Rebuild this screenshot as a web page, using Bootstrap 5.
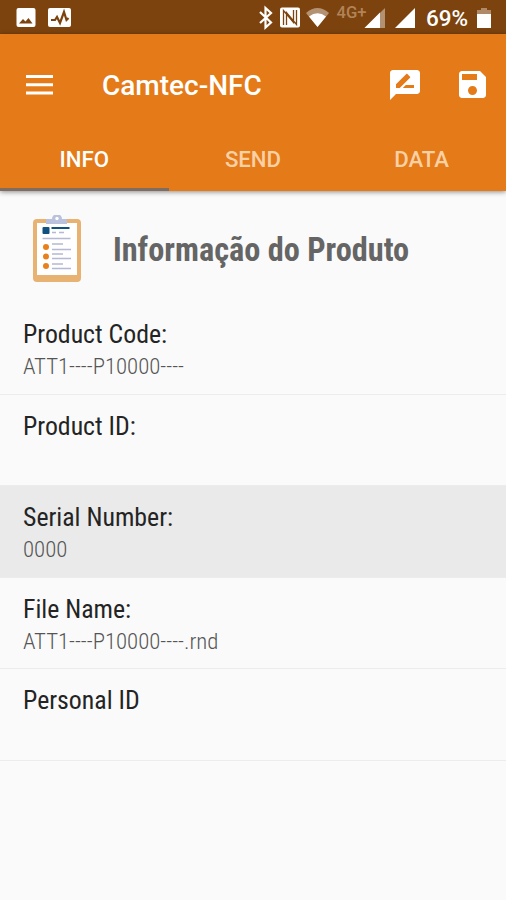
<!DOCTYPE html>
<html lang="pt">
<head>
<meta charset="utf-8">
<meta name="viewport" content="width=device-width, initial-scale=1">
<title>Camtec-NFC</title>
<link href="https://cdn.jsdelivr.net/npm/bootstrap@5.3.0/dist/css/bootstrap.min.css" rel="stylesheet">
<style>
body{font-family:Roboto,sans-serif;background:#fafafa;height:900px;overflow:hidden}
.status{height:34px;background:#7c430e}
.appbar{background:#e47a18;height:157px;box-shadow:0 1px 5px rgba(0,0,0,.45)}
.toolbar{height:103px;padding:0 20px 2px 26px}
.app-title{font-size:28px;font-weight:500;line-height:32px;margin:3px 0 0 49px;white-space:nowrap}
.tabs{height:54px}
.tabs .nav-link{height:54px;padding:0;line-height:44px;font-size:22.2px;font-weight:500;color:#fad0a4;border-radius:0}
.tabs .nav-link.active{color:#fff;border-bottom:3px solid #7e6d60}
.cond{font-family:"Roboto Condensed",Roboto,sans-serif;font-stretch:75%;white-space:nowrap}
.head{height:112px;padding:4px 0 0 32px}
.head h1{font-size:32.3px;font-weight:700;line-height:40px;color:#656565;margin:2px 0 0 31px}
.entry{height:91.5px;padding:14px 23px 0;border-bottom:1px solid #ececec}
.entry.selected{background:#eaeaea}
.entry .name{font-size:25.8px;font-weight:400;line-height:34px;color:#242424}
.entry .value{font-size:22.8px;font-weight:300;line-height:32px;color:#555}
.pct{font-size:22.5px;line-height:36px;font-weight:500;margin-left:6px}
.save{margin-left:39px}
.battery{margin-right:14px}
</style>
</head>
<body>
<header>
<div class="status d-flex text-white">
<svg width="420" height="34" viewBox="0 0 420 34" fill="#fff" class="flex-shrink-0">
<rect x="16.500" y="8" width="19" height="19" rx="2"/><path d="M19 23.500l4-4.500 2.500 2.500 3-3.500 4 5.500z" fill="#7c430e"/>
<rect x="48" y="8" width="23" height="19" rx="2"/><path d="M51 20h4l2-3 3 6 4-11 2.500 8 2-2" fill="none" stroke="#7c430e" stroke-width="2.200"/>
<path d="M260 12l11 10.500-5.500 5V8l5.500 5-11 10" fill="none" stroke="#fff" stroke-width="2.200"/>
<rect x="280" y="7.500" width="20" height="20" rx="2"/><path d="M283.500 25V10.500l10 12V10M296.500 10v14.500l-10-12V25" fill="none" stroke="#7c430e" stroke-width="1.300"/>
<path d="M317.500 27L306 13q11.500-10 23 0z" opacity=".42"/><path d="M317.500 27L309 16.500q8.500-6.500 17 0z"/>
<text x="336.500" y="18" font-size="16.500" font-weight="500" fill="#b28357" textLength="30" lengthAdjust="spacingAndGlyphs">4G+</text>
<path d="M364.500 28L385 8v20z" opacity=".42"/><path d="M364.500 28L380 12.500V28z"/><path d="M395 28L415 8v20z"/>
</svg>
<span class="pct">69%</span>
<svg width="16" height="34" viewBox="0 0 16 34" class="battery ms-auto"><path d="M1 14V10h4V8h6v2h4v4z" fill="#b08a68"/><path d="M1 14h14v14H1z" fill="#fff"/></svg>
</div>
<div class="appbar position-relative text-white">
<div class="toolbar d-flex align-items-center">
<svg width="27" height="20" viewBox="0 0 27 20" fill="#fff"><path d="M0 0h27v3H0zM0 8.200h27v3H0zM0 16.400h27v3H0z"/></svg>
<span class="app-title">Camtec-NFC</span>
<svg class="ms-auto" width="30" height="30" viewBox="2 2 20 20" fill="#fff"><path d="M20 2H4c-1.100 0-1.990.9-1.990 2L2 22l4-4h14c1.100 0 2-.9 2-2V4c0-1.100-.9-2-2-2zM6 14v-2.470l6.880-6.880c.2-.2.510-.2.710 0l1.770 1.770c.2.2.2.510 0 .71L8.470 14H6zm12 0h-7.500l2-2H18v2z"/></svg>
<svg class="save" width="27" height="27" viewBox="3 3 18 18" fill="#fff"><path d="M17 3H5c-1.110 0-2 .9-2 2v14c0 1.100.89 2 2 2h14c1.100 0 2-.9 2-2V7l-4-4zm-5 16c-1.660 0-3-1.340-3-3s1.340-3 3-3 3 1.340 3 3-1.340 3-3 3zm3-10H5V5h10v4z"/></svg>
</div>
<nav class="tabs nav nav-justified flex-nowrap">
<a class="nav-link active" href="#">INFO</a><a class="nav-link" href="#">SEND</a><a class="nav-link" href="#">DATA</a>
</nav>
</div>
</header>
<main>
<div class="head d-flex align-items-center">
<svg width="50" height="68" viewBox="0 0 50 68"><rect x="1" y="4" width="48" height="63" rx="4" fill="#e8b272"/><path d="M5 8h40v52H5z" fill="#fff"/><path d="M14 9V4h6a5 5 0 0 1 10 0h5v5z" fill="#b9c1dd"/><circle cx="25" cy="3.500" r="1.700" fill="#fff"/><rect x="10.500" y="12" width="7" height="7" rx="1" fill="#11517f"/><path d="M19.500 13h18" stroke="#11517f" stroke-width="2"/><path d="M20 17.500h4M27 17.500h5M10.500 23.500h28M20 29h11M20 34.500h19M20 39h11M20 43.500h19M20 49h11M20 53.500h19" stroke="#b5b9d3" stroke-width="1.500"/><g fill="#e8811b"><circle cx="14" cy="32" r="3"/><circle cx="14" cy="41.500" r="3"/><circle cx="14" cy="51" r="3"/></g></svg>
<h1 class="cond mb-0">Informação do Produto</h1>
</div>
<div class="cond">
<div class="entry"><div class="name">Product Code:</div><div class="value">ATT1----P10000----</div></div>
<div class="entry"><div class="name">Product ID:</div></div>
<div class="entry selected"><div class="name">Serial Number:</div><div class="value">0000</div></div>
<div class="entry"><div class="name">File Name:</div><div class="value">ATT1----P10000----.rnd</div></div>
<div class="entry"><div class="name">Personal ID</div></div>
</div>
</main>
<script src="https://cdn.jsdelivr.net/npm/bootstrap@5.3.0/dist/js/bootstrap.bundle.min.js"></script>
</body>
</html>
